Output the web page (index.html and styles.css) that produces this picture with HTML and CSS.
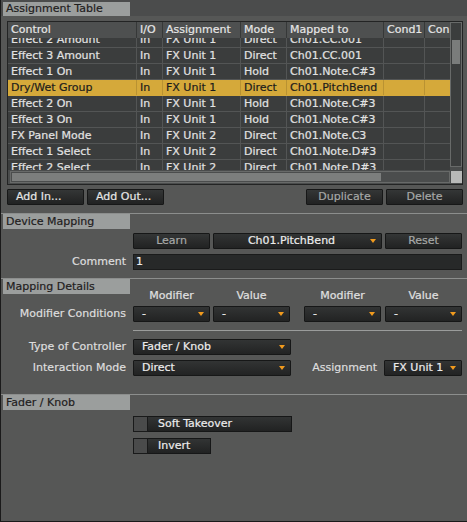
FILE: index.html
```html
<!DOCTYPE html>
<html>
<head>
<meta charset="utf-8">
<link rel="stylesheet" href="styles.css">
</head>
<body>
<div class="win">
  <div class="topband"><div class="tab">Assignment Table</div></div>

  <div class="table">
    <div class="data">
      <div class="row head">
        <div class="c c1">Control</div><div class="c c2">I/O</div><div class="c c3">Assignment</div><div class="c c4">Mode</div><div class="c c5">Mapped to</div><div class="c c6">Cond1</div><div class="c c7">Con</div>
      </div>
      <div class="body">
        <div class="body-inner">
          <div class="row"><div class="c c1">Effect 2 Amount</div><div class="c c2">In</div><div class="c c3">FX Unit 1</div><div class="c c4">Direct</div><div class="c c5">Ch01.CC.001</div><div class="c c6"></div><div class="c c7"></div></div>
          <div class="row"><div class="c c1">Effect 3 Amount</div><div class="c c2">In</div><div class="c c3">FX Unit 1</div><div class="c c4">Direct</div><div class="c c5">Ch01.CC.001</div><div class="c c6"></div><div class="c c7"></div></div>
          <div class="row"><div class="c c1">Effect 1 On</div><div class="c c2">In</div><div class="c c3">FX Unit 1</div><div class="c c4">Hold</div><div class="c c5">Ch01.Note.C#3</div><div class="c c6"></div><div class="c c7"></div></div>
          <div class="row sel"><div class="c c1">Dry/Wet Group</div><div class="c c2">In</div><div class="c c3">FX Unit 1</div><div class="c c4">Direct</div><div class="c c5">Ch01.PitchBend</div><div class="c c6"></div><div class="c c7"></div></div>
          <div class="row"><div class="c c1">Effect 2 On</div><div class="c c2">In</div><div class="c c3">FX Unit 1</div><div class="c c4">Hold</div><div class="c c5">Ch01.Note.C#3</div><div class="c c6"></div><div class="c c7"></div></div>
          <div class="row"><div class="c c1">Effect 3 On</div><div class="c c2">In</div><div class="c c3">FX Unit 1</div><div class="c c4">Hold</div><div class="c c5">Ch01.Note.C#3</div><div class="c c6"></div><div class="c c7"></div></div>
          <div class="row"><div class="c c1">FX Panel Mode</div><div class="c c2">In</div><div class="c c3">FX Unit 2</div><div class="c c4">Direct</div><div class="c c5">Ch01.Note.C3</div><div class="c c6"></div><div class="c c7"></div></div>
          <div class="row"><div class="c c1">Effect 1 Select</div><div class="c c2">In</div><div class="c c3">FX Unit 2</div><div class="c c4">Direct</div><div class="c c5">Ch01.Note.D#3</div><div class="c c6"></div><div class="c c7"></div></div>
          <div class="row"><div class="c c1">Effect 2 Select</div><div class="c c2">In</div><div class="c c3">FX Unit 2</div><div class="c c4">Direct</div><div class="c c5">Ch01.Note.D#3</div><div class="c c6"></div><div class="c c7"></div></div>
        </div>
      </div>
    </div>
    <div class="vscroll"><div class="vthumb"></div></div>
    <div class="hscroll"><div class="hthumb"></div></div>
    <div class="corner"></div>
  </div>

  <div class="btnrow">
    <div class="btn left">Add In...</div>
    <div class="btn left">Add Out...</div>
    <div class="spacer"></div>
    <div class="btn dim">Duplicate</div>
    <div class="btn dim">Delete</div>
  </div>

  <div class="sechead"><div class="tab">Device Mapping</div></div>

  <div class="form learnrow">
    <div class="lbl"></div>
    <div class="ctrls">
      <div class="btn dim">Learn</div>
      <div class="dd center w169">Ch01.PitchBend</div>
      <div class="btn dim">Reset</div>
    </div>
  </div>
  <div class="form commentrow">
    <div class="lbl">Comment</div>
    <div class="ctrls"><div class="input">1</div></div>
  </div>

  <div class="sechead"><div class="tab">Mapping Details</div></div>

  <div class="form colheads">
    <div class="lbl"></div>
    <div class="ctrls quad">
      <div class="colh">Modifier</div>
      <div class="colh">Value</div>
      <div class="colh pair2">Modifier</div>
      <div class="colh pair2b">Value</div>
    </div>
  </div>
  <div class="form modrow">
    <div class="lbl">Modifier Conditions</div>
    <div class="ctrls quad">
      <div class="dd">-</div>
      <div class="dd">-</div>
      <div class="dd pair2">-</div>
      <div class="dd pair2b">-</div>
    </div>
  </div>
  <div class="form seprow">
    <div class="lbl"></div>
    <div class="sep"></div>
  </div>
  <div class="form typerow">
    <div class="lbl">Type of Controller</div>
    <div class="ctrls"><div class="dd w158">Fader / Knob</div></div>
  </div>
  <div class="form moderow">
    <div class="lbl">Interaction Mode</div>
    <div class="ctrls">
      <div class="dd w158">Direct</div>
      <div class="lbl2">Assignment</div>
      <div class="dd w78">FX Unit 1</div>
    </div>
  </div>

  <div class="sechead fader"><div class="tab">Fader / Knob</div></div>

  <div class="form checkrow">
    <div class="lbl"></div>
    <div class="ctrls"><div class="check w159"><span class="box"></span><span class="ctext">Soft Takeover</span></div></div>
  </div>
  <div class="form checkrow">
    <div class="lbl"></div>
    <div class="ctrls"><div class="check w78"><span class="box"></span><span class="ctext">Invert</span></div></div>
  </div>
</div>
</body>
</html>
```

FILE: styles.css
```css
* { box-sizing: border-box; }
html, body { margin: 0; padding: 0; background: #565756; }
body {
  font-family: "DejaVu Sans", "Liberation Sans", sans-serif;
  font-size: 11px;
  color: #e2e2e2;
  -webkit-text-stroke: 0.2px currentColor;
}
.win {
  width: 467px;
  height: 522px;
  background: #565756;
  border-left: 1px solid #1a1a1a;
  border-bottom: 1px solid #1a1a1a;
  overflow: hidden;
}

/* section headers */
.topband {
  height: 16px;
  background: #4b4c4c;
  padding-top: 2px;
}
.tab {
  width: 127px;
  height: 15px;
  margin-left: 2px;
  background: #9b9e9d;
  color: #1f2020;
  line-height: 15px;
  padding-left: 3px;
  white-space: nowrap;
}
.topband .tab { height: 14px; line-height: 13px; }
.sechead {
  margin-top: 8px;
  border-top: 1px solid #8c8e8d;
  height: 16px;
}

/* table */
.table {
  margin: 5px 0 0 6px;
  width: 456px;
  height: 164px;
  border: 1px solid #232424;
  background: #4a4c4c;
  display: grid;
  grid-template-columns: 442px 12px;
  grid-template-rows: 148px 14px;
}
.data { overflow: hidden; background: #3b3d3d; }
.row {
  display: flex;
  height: 16px;
  border-bottom: 1px solid #535555;
  line-height: 15px;
  white-space: nowrap;
}
.row.head {
  background: #4e5050;
  border-bottom: none;
  color: #e6e6e6;
}
.row.head .c { border-right-color: #363838; }
.c {
  padding-left: 3px;
  border-right: 1px solid #535555;
  overflow: hidden;
  flex: none;
}
.c1 { width: 129px; }
.c2 { width: 26px; }
.c3 { width: 78px; }
.c4 { width: 46px; }
.c5 { width: 97px; }
.c6 { width: 41px; }
.c7 { width: 25px; border-right: none; }
.body { height: 132px; overflow: hidden; }
.body-inner { margin-top: -6px; }
.row.sel { background: #d5a93a; color: #1c1c1c; border-bottom-color: #d5a93a; }
.row.sel .c { border-right-color: #b99232; }

.vscroll {
  margin: 0 0 3px 0;
  border: 1px solid #686a69;
  background: #3b3d3d;
  padding: 17px 1px 0 1px;
}
.vthumb { height: 24px; background: #7a7c7b; }
.hscroll {
  margin: 1px 0 0 2px;
  height: 12px;
  border: 1px solid #686a69;
  background: #4b4d4d;
  padding: 1px 68px 1px 1px;
}
.hthumb { height: 100%; background: #7c7e7d; }
.corner {
  margin: 1px 0 0 1px;
  height: 12px;
  background: #b8b9b8;
}

/* buttons */
.btnrow {
  display: flex;
  margin: 4px 0 0 6px;
  width: 456px;
  gap: 3px;
}
.spacer { flex: 1; }
.btn {
  width: 77px;
  height: 16px;
  background: linear-gradient(#343636, #212222);
  border: 1px solid #161717;
  border-radius: 1px;
  color: #e6e6e6;
  text-align: center;
  line-height: 14px;
  white-space: nowrap;
  flex: none;
}
.btn.left { text-align: left; padding-left: 8px; }
.btn.dim { color: #a6a8a7; }

/* form */
.form {
  display: grid;
  grid-template-columns: 125px 329px;
  column-gap: 7px;
}
.lbl {
  text-align: right;
  line-height: 16px;
  color: #dedede;
  white-space: nowrap;
}
.ctrls { display: flex; gap: 3px; align-items: center; }
.learnrow { margin-top: 4px; }
.commentrow { margin-top: 5px; }

.dd {
  position: relative;
  width: 77px;
  height: 16px;
  background: linear-gradient(#323434, #222323);
  border: 1px solid #161717;
  border-radius: 1px;
  color: #ececec;
  line-height: 14px;
  padding-left: 8px;
  white-space: nowrap;
  display: flex;
  flex: none;
}
.dd::after {
  content: "";
  margin-left: auto;
  margin-right: 5px;
  margin-top: 5px;
  width: 0;
  height: 0;
  border-left: 3.5px solid transparent;
  border-right: 3.5px solid transparent;
  border-top: 4px solid #f19b1e;
}
.dd.center { padding-left: 0; padding-right: 12px; justify-content: center; }
.dd.center::after { position: absolute; right: 0; top: 0; }
.dd.w169 { width: 169px; }
.dd.w158 { width: 158px; }
.dd.w78 { width: 78px; }

.input {
  width: 329px;
  height: 16px;
  background: #272929;
  border: 1px solid #1a1b1b;
  line-height: 14px;
  padding-left: 2px;
  color: #ececec;
}

.colheads { margin-top: -4px; }
.colheads .lbl { line-height: 12px; }
.colh { width: 77px; text-align: center; line-height: 12px; color: #e0e0e0; flex: none; }
.pair2 { margin-left: 11px; }
.pair2b { margin-left: 1px; }
.modrow { margin-top: 4px; }
.seprow { margin-top: 8px; }
.sep { height: 1px; background: #9a9c9b; width: 329px; }
.typerow { margin-top: 8px; }
.moderow { margin-top: 5px; }
.moderow .ctrls { gap: 0; }
.lbl2 {
  width: 86px;
  margin-right: 7px;
  text-align: right;
  color: #dedede;
  line-height: 16px;
  white-space: nowrap;
}

.fader { margin-top: 18px; }
.checkrow { margin-top: 6px; }
.check {
  display: flex;
  height: 16px;
  flex: none;
}
.check.w159 { width: 159px; }
.check.w78 { width: 78px; }
.box {
  width: 15px;
  height: 16px;
  background: #4a4b4b;
  border: 1px solid #191a1a;
  flex: none;
}
.ctext {
  flex: 1;
  height: 16px;
  background: linear-gradient(#323434, #212222);
  border: 1px solid #161717;
  border-left: none;
  line-height: 14px;
  padding-left: 10px;
  color: #ececec;
  white-space: nowrap;
}
```
